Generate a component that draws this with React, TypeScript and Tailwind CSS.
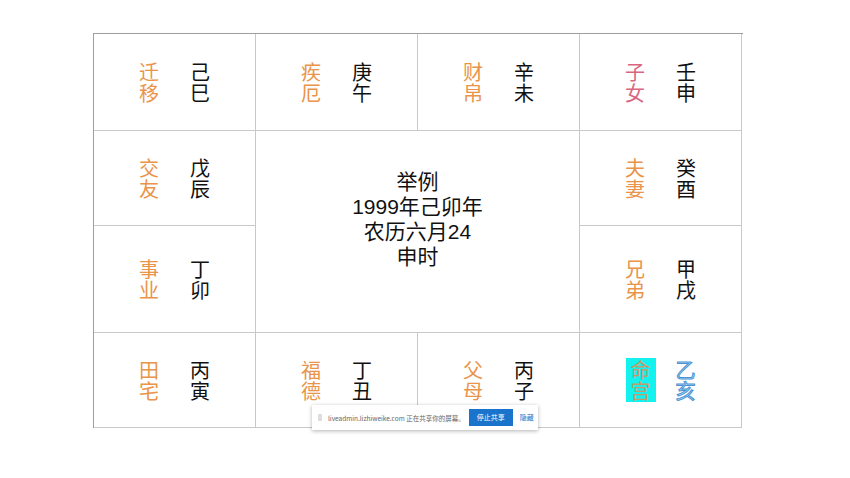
import React from "react";

type Cell = {
  label: string;
  value: string;
  labelClass?: string;
  valueClass?: string;
};

const font = "font-['Noto_Sans_CJK_SC','Noto_Sans',sans-serif]";

// two characters stacked: one text node, wrapped to one char per line
const stack = "block w-[20px] break-all text-[20px] leading-[21px]";

function Palace({ label, value, labelClass, valueClass }: Cell) {
  return (
    <div className="flex items-center justify-center gap-[31px] border-r border-b border-[#c9c9c9]">
      <span className={stack + " " + (labelClass ?? "text-[#e9944a]")}>{label}</span>
      <span className={stack + " " + (valueClass ?? "text-[#111]")}>{value}</span>
    </div>
  );
}

export default function App() {
  return (
    <div className={"relative w-[850px] h-[478px] bg-white overflow-hidden " + font}>
      <div className="ml-[93px] mt-[33px] w-[650px] grid grid-cols-[162px_162px_162px_162px] grid-rows-[97px_95px_107px_95px] border-l border-t border-[#9e9e9e]">
        <Palace label="迁移" value="己巳" />
        <Palace label="疾厄" value="庚午" />
        <Palace label="财帛" value="辛未" />
        <Palace label="子女" value="壬申" labelClass="text-[#d9657f]" />

        <Palace label="交友" value="戊辰" />
        <div className="col-span-2 row-span-2 flex items-center justify-center pb-[26px] border-r border-b border-[#c9c9c9]">
          <p className="text-center font-['Liberation_Sans','Noto_Sans_CJK_SC',sans-serif] text-[21px] leading-[25px] text-[#111]">
            举例
            <br />
            1999年己卯年
            <br />
            农历六月24
            <br />
            申时
          </p>
        </div>
        <Palace label="夫妻" value="癸酉" />

        <Palace label="事业" value="丁卯" />
        <Palace label="兄弟" value="甲戌" />

        <Palace label="田宅" value="丙寅" />
        <Palace label="福德" value="丁丑" />
        <Palace label="父母" value="丙子" />
        <div className="flex items-center justify-center gap-[20px] border-r border-b border-[#c9c9c9]">
          <div className="px-[5px] py-[1px] bg-[#14f2f0]">
            <span className={stack + " text-[#c79a6a]"}>命宫</span>
          </div>
          <span className={stack + " text-[#b6dcf4] [-webkit-text-stroke:1px_#4a93d4]"}>乙亥</span>
        </div>
      </div>

      <div className="absolute left-[312px] top-[405px] w-[226px] h-[25px] bg-white shadow-[0_1px_4px_rgba(0,0,0,0.3)] flex items-center pl-[6px] pr-[6px]">
        <div className="shrink-0 w-[4px] h-[7px] bg-[#ddd] mr-[6px]" />
        <span className="shrink-0 text-[6.5px] leading-[8px] text-[#666] whitespace-nowrap">
          liveadmin.lizhiweike.com 正在共享你的屏幕。
        </span>
        <div className="shrink-0 ml-[4px] w-[44px] h-[17px] bg-[#1b74cb] text-white text-[7px] whitespace-nowrap flex items-center justify-center">
          停止共享
        </div>
        <span className="shrink-0 ml-[7px] text-[7px] text-[#1b74cb] whitespace-nowrap">隐藏</span>
      </div>
    </div>
  );
}
